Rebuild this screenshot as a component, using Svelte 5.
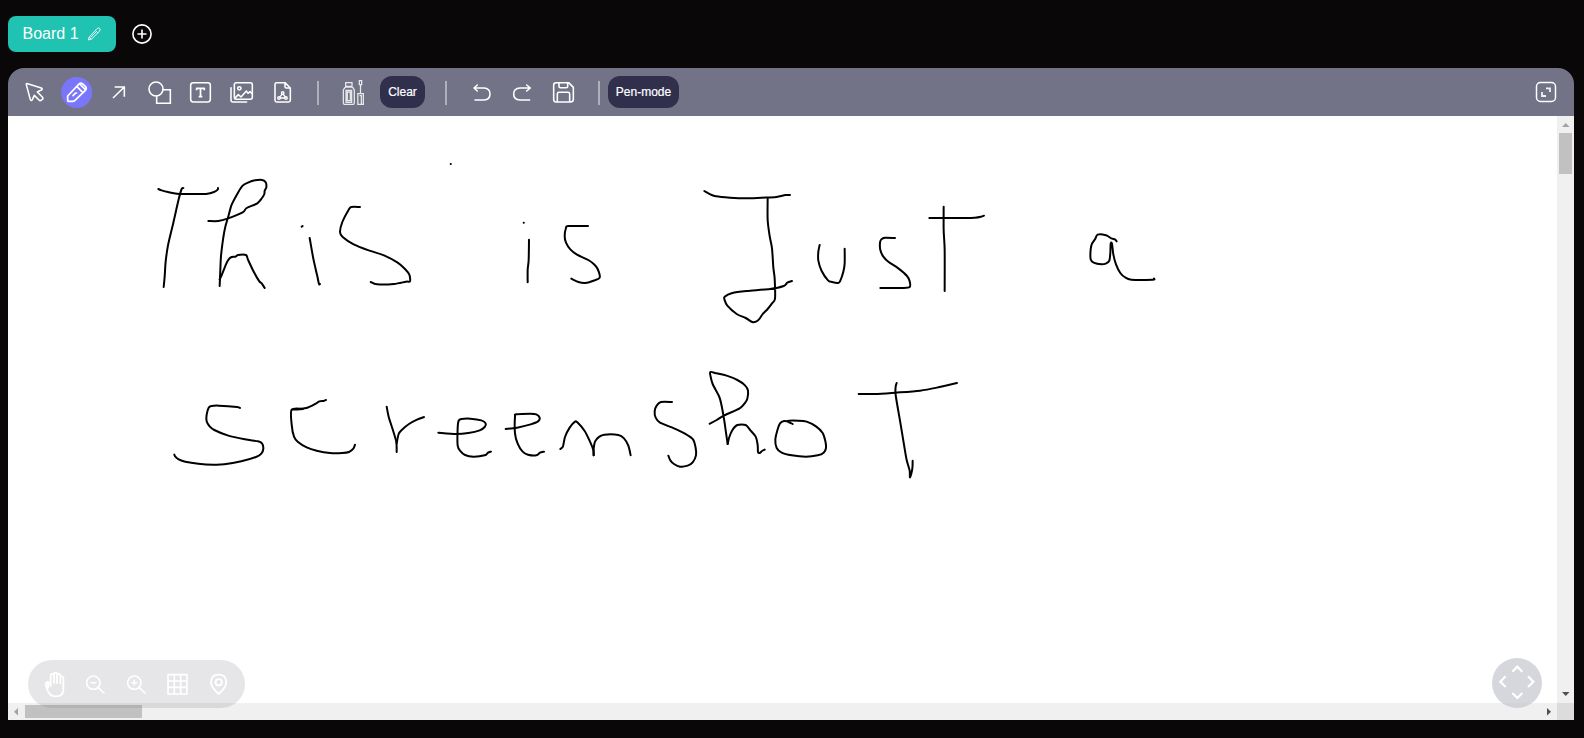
<script>
  // Pen strokes, grouped by tile; each stroke is a flat list of x,y pairs at 3x scale.
  const tiles = [
    { x: 140, y: 150, strokes: [
      '55 117 65 121 84 126 118 132 180 132 198 132 222 126 233 119 234 114',
      '130 114 125 117 116 148 100 218 84 286 77 335 74 380 71 411',
      '205 213 235 213 262 206 308 187 320 174 352 160 366 144 373 132 374 122 379 112 377 97 367 90 345 91 324 98 308 107 294 128 275 164 267 192 256 230 250 262 243 318 241 360 239 408',
      '239 388 246 373 258 343 266 328 275 321 287 320 294 315 318 315 324 329 342 367 358 394 365 400 374 414',
      '485 230 488 228', '509 264 520 326 532 379 537 402 540 402',
      '660 171 634 171 626 179 607 216 600 246 608 261 641 283 686 301 732 316 773 338 795 357 808 374 810 394 798 395 762 402 711 403 692 396',
      '932 42 932.5 42' ] },
    { x: 500, y: 170, strokes: [
      '71 158 71.5 158', '87 209 86 270 83 299 83 337',
      '264 168 205 168 198 174 194 198 198 218 211 238 231 254 265 270 282 283 293 297 299 323 278 333 256 339 235 336 214 326',
      '613 63 631 73 648 79 690 83 735 85 785 83 829 81 856 75 870 75',
      '803 86 803 150 809 198 816 235 820 292 824 326 825 386 816 400 803 417 789 431 777 448 768 455 757 456 737 444 710 432 682 407 674 390 674 380 697 369 740 363 810 357 851 348 862 338 876 333' ] },
    { x: 800, y: 180, strokes: [
      '59 195 55 215 55 242 65 273 84 301 96 306 114 309 120 304 130 275 134 250 134 206',
      '285 174 255 173 244 178 240 188 241 210 250 230 266 246 295 265 321 288 329 304 329 321 306 324 241 324',
      '431 80 431 150 434 210 434 333', '388 114 500 114 525 113 543 110 552 107',
      '950 184 945 178 934 175 918 166 893 164 886 176 876 191 872 208 872 238 881 248 904 253 919 250 928 242 931 218 932 191 936 191 940 223 948 253 961 279 974 291 994 299 1058 299 1062 296' ] },
    { x: 150, y: 360, strokes: [
      '270 144 261 141 207 137 184 138 176 143 170 164 170 184 178 198 193 210 235 227 285 238 324 244 336 250 340 266 334 281 318 291 274 304 223 313 190 314 145 311 106 305 86 298 76 290 73 284',
      '528 120 521 123 508 124 499 130 469 144 425 149 459 147 425 149 425 194 432 230 444 246 470 262 500 272 540 279 577 279 597 276 610 266 615 254',
      '710 140 716 170 728 208 739 246 740 276', '740 250 746 222 756 209 777 192 801 179 822 171' ] },
    { x: 430, y: 360, strokes: [
      '25 218 78 222 115 219 149 211 164 201 167 190 154 181 121 176 94 177 86 182 83 204 83 257 92 274 105 285 130 290 164 286 174 278 183 275',
      '227 207 261 203 302 193 324 184 329 173 319 163 302 161 259 163 255 170 255 220 263 251 278 275 294 284 319 286 330 278 342 275',
      '391 267 399 259 405 231 419 203 435 185 442 187 464 213 481 247 490 270 491 286', '491 286 491 266 495 245 508 230 523 224 565 225 582 235 595 257 602 286',
      '726 126 693 126 680 137 674 154 677 173 690 188 732 205 765 221 789 238 797 264 798 286 788 307 773 317 750 320 732 312 721 301 715 287' ] },
    { x: 690, y: 360, strokes: [
      '59 191 80 180 103 166 149 145 164 130 172 116 174 92 165 76 142 60 110 47 80 40 61 36 62 50 68 72 88 111 95 138 103 183 108 218 113 252',
      '113 252 117 234 126 212 142 195 167 195 182 212 197 230 203 255 204 276 209 279 216 273 224 269',
      '308 192 292 183 325 182 350 185 378 199 398 219 406 243 408 264 401 278 383 286 348 290 305 286 275 278 260 264 256 239 263 208 270 190 282 183 299 185',
      '506 102 555 102 615 98 690 92 745 82 801 69', '620 69 617 80 617 105 631 188 642 254 650 300 659 332 660 352 667 326 668 302' ] }
  ];

  // Catmull-Rom interpolation through the recorded points.
  function smooth(text) {
    const n = text.split(' ').map(Number);
    const p = [];
    for (let i = 0; i < n.length; i += 2) p.push([n[i], n[i + 1]]);
    let d = `M${p[0][0]} ${p[0][1]}`;
    for (let i = 0; i < p.length - 1; i++) {
      const a = p[i - 1] ?? p[i], b = p[i], c = p[i + 1], e = p[i + 2] ?? c;
      const k = 7;
      d += `C${b[0] + (c[0] - a[0]) / k} ${b[1] + (c[1] - a[1]) / k} ${c[0] - (e[0] - b[0]) / k} ${c[1] - (e[1] - b[1]) / k} ${c[0]} ${c[1]}`;
    }
    return d;
  }
</script>

<div class="page">
  <nav class="tabs">
    <button class="tab">
      <span>Board 1</span>
      <svg width="15" height="16" viewBox="259 80 45 48"><g fill="none" stroke="#fff" stroke-width="2.6" stroke-linejoin="round"><path d="M265 114 289 88Q293 84 297 87Q300 91 297 95L273 119 263 122Z M284 93 292 101M265 114 272 120M270 114 287 97" /></g></svg>
    </button>
    <button class="add" aria-label="Add board">
      <svg width="20" height="20" viewBox="0 0 20 20" fill="none" stroke="#fff" stroke-width="1.6"><circle cx="10" cy="10" r="9.1" /><path d="M10 5.5v9M5.5 10h9" /></svg>
    </button>
  </nav>

  <main class="board">
    <header class="toolbar">
      <button class="tool" aria-label="Select"><svg viewBox="45 204 123 144"><path d="M79 254Q78 250 83 251L124 264Q129 267 124 270L112 276 127 291Q131 295 127 298L123 301Q120 303 117 300L103 286 97 299Q94 304 91 299Z" /></svg></button>
      <button class="tool" aria-label="Pen"><svg viewBox="168 204 123 144"><circle cx="230" cy="277.5" r="46.5" fill="#7a76fb" stroke="none" /><path d="M203 288 236 253Q241 247 247 251L257 260Q261 265 256 271L225 301Q222 304 218 304H206Q203 304 203 301Z M231 260 248 277M239 252 256 269" stroke-width="5.2" /><path d="M219 287 225 281M225 280 230 279" /></svg></button>
      <button class="tool" aria-label="Arrow"><svg viewBox="291 204 123 144"><path d="M339 294 373 261M344 261H373V290" stroke-linecap="butt" stroke-linejoin="miter" /></svg></button>
      <button class="tool" aria-label="Shapes"><svg viewBox="414 204 123 144"><circle cx="468" cy="267" r="21" /><path d="M490 269H511V310H470V289" stroke-linejoin="miter" /></svg></button>
      <button class="tool" aria-label="Text"><svg viewBox="537 204 123 144"><rect x="572" y="248" width="59" height="58" rx="8" /><path d="M590 271V265H613V271M601.5 265V289M596 290H607" stroke-width="5.2" stroke-linecap="butt" /></svg></button>
      <button class="tool" aria-label="Image"><svg viewBox="300 9 123 144"><rect x="343" y="53" width="54" height="50" rx="6" /><path d="M333 68V105Q333 111 339 111H380M344 100 355 89 363 96 379 78 384 85 390 80 397 87" /><circle cx="358" cy="70" r="5" /></svg></button>
      <button class="tool" aria-label="File"><svg viewBox="423 9 123 144"><path d="M470 53H495L511 69V106Q511 111 506 111H470Q465 111 465 106V58Q465 53 470 53ZM495 54V65Q495 69 499 69H510" /><g stroke-width="4"><circle cx="488" cy="84" r="3.8" /><circle cx="477" cy="99" r="3.8" /><circle cx="498" cy="99" r="3.8" /><path d="M486 88 480 95M490 88 495 95M481 99H494" /></g></svg></button>
      <i class="sep first"></i>
      <button class="tool" aria-label="Style"><svg viewBox="102 9 123 144" class="soft"><path d="M137 53H156V64H137ZM135 66H158M135 67 130 75V113Q130 118 134 118H159Q163 118 163 113V75L158 67M138 76H155V112H138ZM142 81H151V107H142ZM178 47H185V59H178ZM181.5 59V84M173.500 86H190V118H173.500ZM179 92H184V117" /></svg></button>
      <button class="chip clear">Clear</button>
      <i class="sep second"></i>
      <button class="tool" aria-label="Undo"><svg viewBox="483 9 123 144"><path d="M522 69H552Q570 70 570 87Q570 104 552 105H525M532 60 522 69 532 78" /></svg></button>
      <button class="tool" aria-label="Redo"><svg viewBox="606 9 123 144"><path d="M691 69H660Q641 70 641 87Q641 104 660 105H689M680 60 691 69 680 78" /></svg></button>
      <button class="tool" aria-label="Save"><svg viewBox="729 9 123 144"><path d="M768 53H806L820 67V103Q820 111 812 111H768Q761 111 761 103V60Q761 53 768 53ZM777 53V65Q777 68 781 68H799Q803 68 803 65V53M772 111V87Q772 82 777 82H804Q809 82 809 87V111" /></svg></button>
      <i class="sep third"></i>
      <button class="chip mode">Pen-mode</button>
      <button class="full" aria-label="Fullscreen"><svg width="22" height="22" viewBox="183 78 66 66" fill="none" stroke="#fff" stroke-width="4.4"><rect x="187.5" y="82.5" width="57" height="57" rx="12" /><path d="M216 100H228V111M204 111V123H216" stroke-width="5.4" opacity=".9" /></svg></button>
    </header>

    <div class="viewport">
      <svg class="drawing" viewBox="8 116 1549 587">
        {#each tiles as tile}
          <g transform="translate({tile.x} {tile.y}) scale(.33333)">
            {#each tile.strokes as stroke}<path d={smooth(stroke)} />{/each}
          </g>
        {/each}
      </svg>
      <div class="vbar">
        <svg width="17" height="17" viewBox="0 0 17 17"><path d="M5 11h7.500L8.750 7z" fill="#a3a3a3" /></svg>
        <div class="vthumb"></div>
        <svg class="end" width="17" height="17" viewBox="0 0 17 17"><path d="M5 6h7.500L8.750 10z" fill="#505050" /></svg>
      </div>
      <div class="hbar">
        <svg width="17" height="17" viewBox="0 0 17 17"><path d="M10 5v7.500L6 8.750z" fill="#a3a3a3" /></svg>
        <div class="hthumb"></div>
        <svg class="end" width="17" height="17" viewBox="0 0 17 17"><path d="M7 5v7.500L11 8.750z" fill="#505050" /></svg>
      </div>
      <div class="corner"></div>
    </div>

    <div class="view-tools">
      <button class="tool" aria-label="Pan"><svg viewBox="105 60 123 144"><path stroke-width="5.4" d="M145 142 144 134Q141 127 138 130Q136 132 138 138L144 154Q151 169 167 169Q190 169 190 149V115Q190 109 185 109Q181 109 181 114V130M181 116V106Q181 101 176 101Q171 101 171 106V129M171 106V102Q171 98 166 98Q162 98 162 102V129M162 107Q162 102 157 102Q152 102 152 107V138Q147 126 143 126Q137 126 138 132" /></svg></button>
      <button class="tool" aria-label="Zoom out"><svg viewBox="228 60 123 144"><circle cx="280" cy="128" r="20" /><path d="M294 142 312 159M273 128H287" /></svg></button>
      <button class="tool" aria-label="Zoom in"><svg viewBox="351 60 123 144"><circle cx="403" cy="128" r="20" /><path d="M417 142 435 159M396 128H410M403 121V135" /></svg></button>
      <button class="tool" aria-label="Grid"><svg viewBox="474 60 123 144"><path d="M504 104H561V162H504ZM523 104V162M542 104V162M504 123H561M504 142H561" stroke-width="4.8" /></svg></button>
      <button class="tool" aria-label="Locate"><svg viewBox="597 60 123 144"><path d="M656 162Q633 142 633 126Q634 104 656 104Q678 104 679 126Q679 142 656 162Z" stroke-width="5.6" /><circle cx="656" cy="127" r="9.500" stroke-width="5.6" /></svg></button>
    </div>

    <div class="pad">
      <svg width="50" height="50" viewBox="84 54 150 150" fill="none" stroke="#fff" stroke-width="6.6"><path d="M145 95 160 80 175 95M145 159 160 174 175 159M125 109 109 125 125 141M192 109 208 125 192 141" /></svg>
    </div>
  </main>
</div>

<style>
  :global(body) { background: #0a0708; }
  .page { box-sizing: border-box; height: 738px; padding: 16px 10px 18px 8px; background: #0a0708; font-family: "Liberation Sans", Arial, sans-serif; }
  button { margin: 0; padding: 0; border: 0; background: none; color: #fff; font-family: inherit; }
  svg { display: block; }
  .tabs { display: flex; align-items: center; height: 36px; margin-bottom: 16px; }
  .tab { display: flex; align-items: center; gap: 8px; box-sizing: border-box; width: 108px; height: 36px; padding-left: 14.5px; border-radius: 8px; background: #20c3b1; font-size: 16px; white-space: nowrap; }
  .tab span { margin-top: -1px; }
  .add { margin-left: 16px; }
  .board { position: relative; height: 652px; }
  .toolbar { display: flex; align-items: center; box-sizing: border-box; height: 48px; padding-left: 7px; border-radius: 16px 16px 0 0; background: #737387; }
  .tool, .tool svg { flex: none; width: 41px; height: 48px; }
  .tool svg { fill: none; stroke: #fff; stroke-width: 4.7; stroke-linecap: round; stroke-linejoin: round; }
  .tool .soft { stroke-width: 3.8; stroke-linecap: butt; stroke-linejoin: miter; opacity: .85; }
  .sep { flex: none; width: 2px; height: 24px; margin-top: 1px; background: #b0b0ba; }
  .first { margin-left: 15px; margin-right: 15px; }
  .second { margin: 1px 14px 0 20px; }
  .third { margin: 1px 8px 0 14px; }
  .chip { flex: none; height: 32px; border-radius: 12px; background: #30304d; font-size: 12px; white-space: nowrap; -webkit-text-stroke: .2px #fff; }
  .clear { width: 45px; margin-left: 5px; }
  .mode { width: 71px; }
  .full { margin-left: auto; margin-right: 17px; }
  .viewport { display: grid; grid-template-columns: 1549px 17px; grid-template-rows: 587px 17px; background: #fff; }
  .drawing { width: 1549px; height: 587px; fill: none; stroke: #000; stroke-width: 6; stroke-linecap: round; stroke-linejoin: round; }
  .vbar { display: flex; flex-direction: column; align-items: center; background: #f0f0f0; }
  .vthumb { width: 13px; height: 41px; background: #c1c1c1; }
  .vbar .end { margin-top: auto; }
  .hbar { display: flex; align-items: center; background: #f0f0f0; }
  .hthumb { width: 117px; height: 13px; background: #c1c1c1; }
  .hbar .end { margin-left: auto; }
  .corner { background: #dcdcdc; }
  .view-tools { position: absolute; left: 20px; bottom: 12px; display: flex; box-sizing: border-box; width: 217px; height: 48px; padding-left: 7px; border-radius: 24px; background: rgba(116, 116, 128, .18); }
  .pad { position: absolute; left: 1484px; top: 590px; width: 50px; height: 50px; border-radius: 50%; background: rgba(198, 198, 208, .72); }
</style>
